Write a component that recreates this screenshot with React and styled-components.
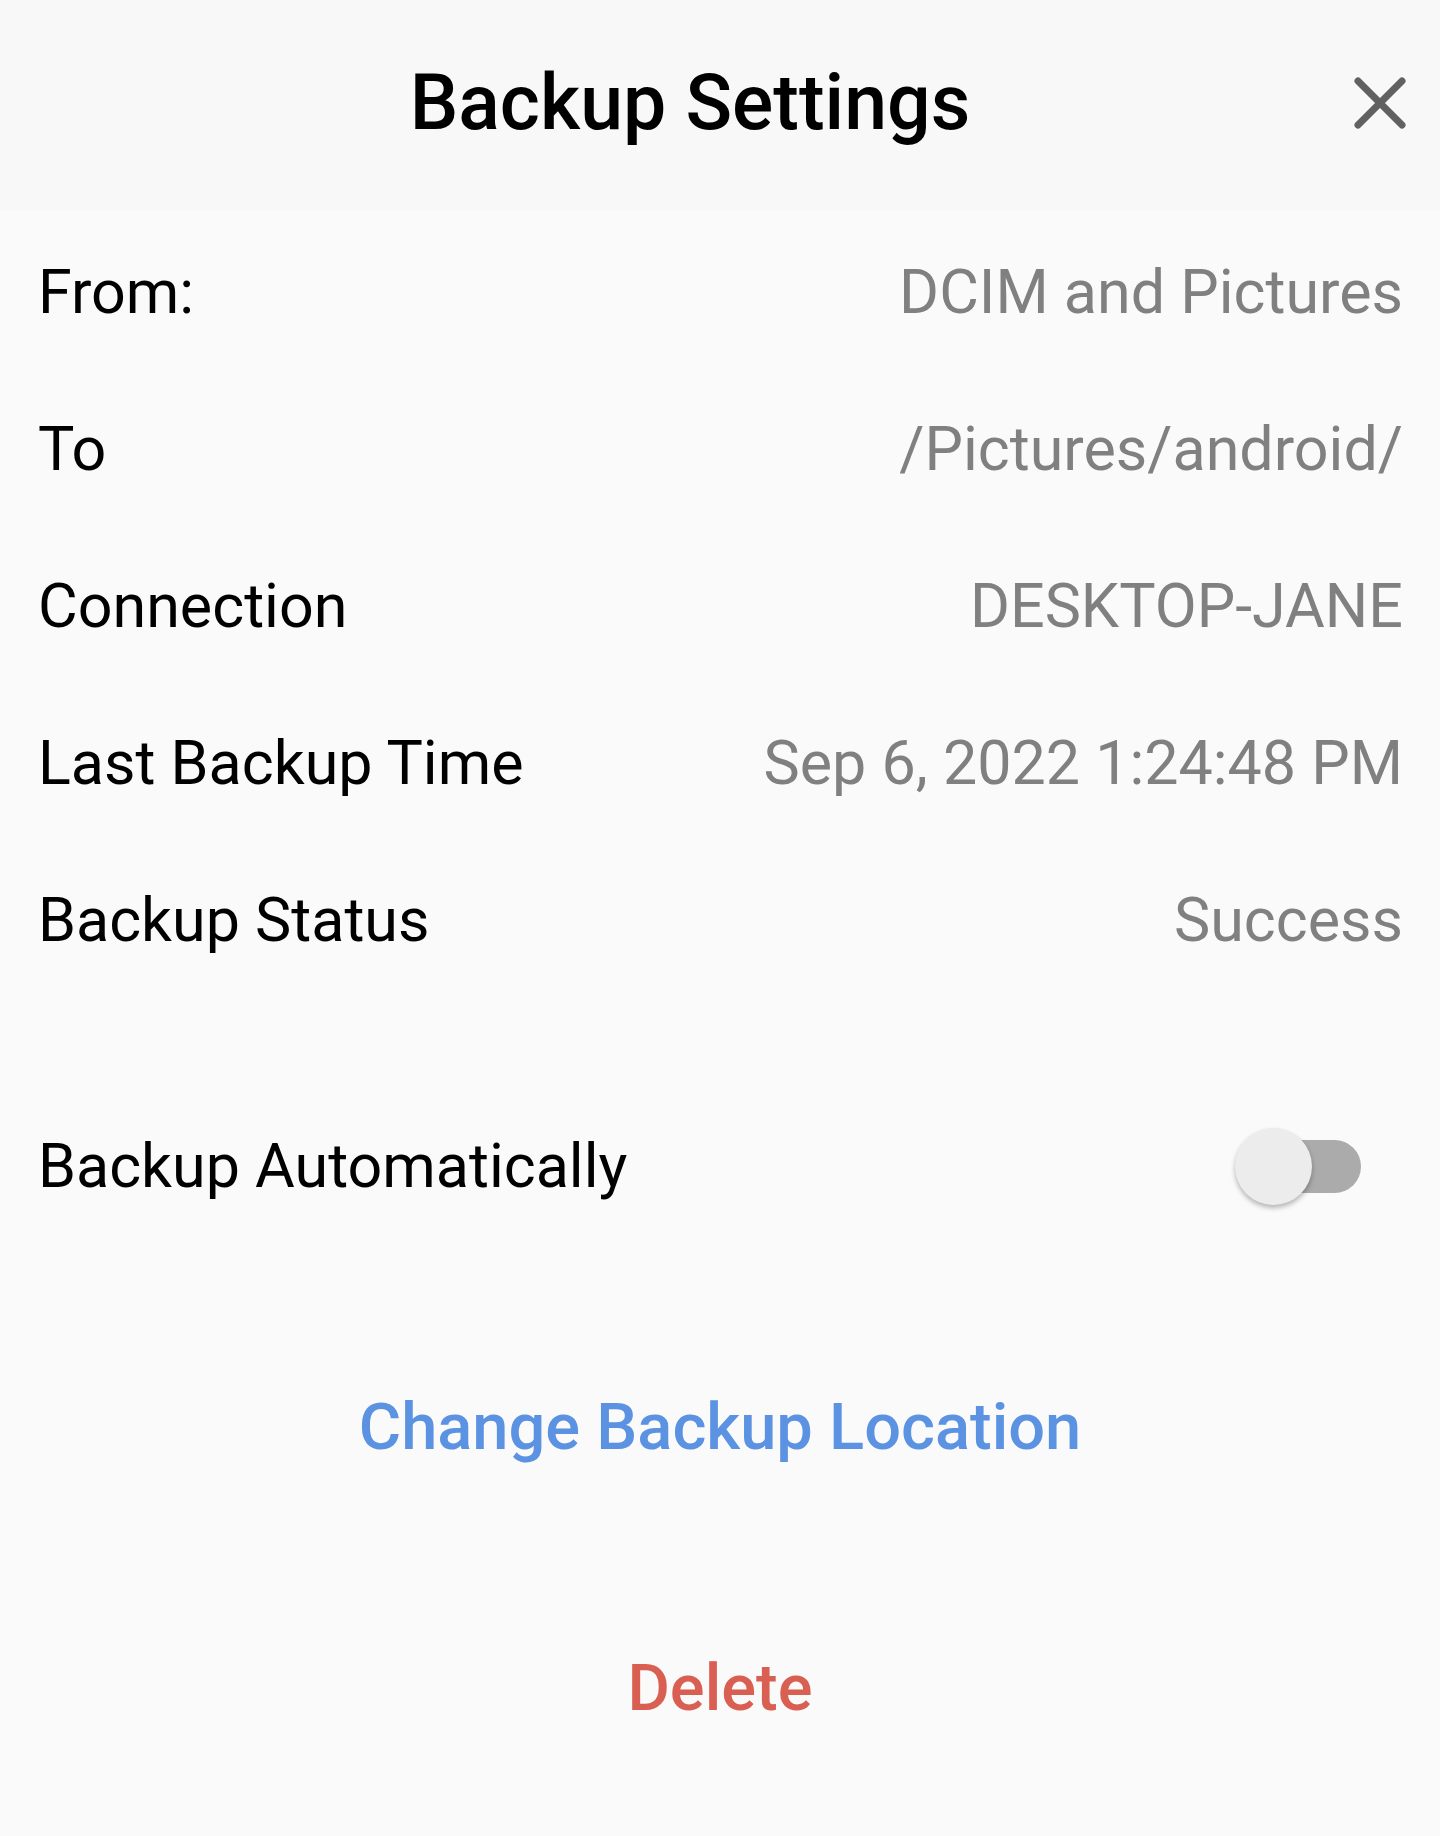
import React, { useState } from "react";
import styled, { createGlobalStyle } from "styled-components";

const Global = createGlobalStyle`
  html, body { margin: 0; padding: 0; background: #fafafa; }
  body { font-family: Roboto, "Noto Sans", "Liberation Sans", sans-serif; }
  * { box-sizing: border-box; }
`;

const Screen = styled.div`
  width: 1440px;
  min-height: 1836px;
  background: #fafafa;
  display: flex;
  flex-direction: column;
`;

const Header = styled.header`
  height: 209px;
  background: #f8f8f8;
  display: flex;
  align-items: center;
  padding-right: 34px;
`;

const Title = styled.h1`
  flex: 1;
  margin: 0;
  padding-left: 26px;
  text-align: center;
  font-size: 77px;
  font-weight: 500;
  line-height: 1;
  color: #000;
  margin-top: -2px;
`;

const CloseButton = styled.button`
  width: 52px;
  height: 52px;
  padding: 0;
  border: none;
  background: none;
  display: flex;
  align-items: center;
  justify-content: center;
  cursor: pointer;
  margin-top: -4px;
`;

const InfoList = styled.section`
  display: flex;
  flex-direction: column;
  padding-top: 5px;
`;

const Row = styled.div`
  height: 157px;
  display: flex;
  align-items: center;
  justify-content: space-between;
  padding: 0 37px 0 38px;
  font-size: 61px;
  line-height: 1;
`;

const Label = styled.span`
  color: #000;
`;

const Value = styled.span`
  color: #808080;
`;

const ToggleRow = styled(Row)`
  margin-top: 89px;
  padding-right: 79px;
`;

const Switch = styled.button`
  position: relative;
  width: 126px;
  height: 77px;
  padding: 0;
  border: none;
  background: none;
  cursor: pointer;
`;

const Track = styled.span`
  position: absolute;
  right: 0;
  top: 12px;
  width: 106px;
  height: 53px;
  border-radius: 27px;
  background: ${(p) => (p.$on ? "#9dbdf0" : "#ababab")};
`;

const Thumb = styled.span`
  position: absolute;
  top: 0;
  left: ${(p) => (p.$on ? "49px" : "0")};
  width: 77px;
  height: 77px;
  border-radius: 50%;
  background: ${(p) => (p.$on ? "#5b92e1" : "#ececec")};
  box-shadow: 0 3px 5px rgba(0, 0, 0, 0.28);
`;

const Actions = styled.section`
  display: flex;
  flex-direction: column;
  gap: 104px;
  padding-top: 104px;
`;

const ActionButton = styled.button`
  height: 157px;
  border: none;
  background: none;
  font-family: Roboto, "Noto Sans", "Liberation Sans", sans-serif;
  font-size: 65px;
  font-weight: 500;
  line-height: 1;
  color: ${(p) => p.$color};
  cursor: pointer;
  display: flex;
  align-items: center;
  justify-content: center;
`;

const CloseIcon = () => (
  <svg width="52" height="52" viewBox="0 0 52 52" fill="none">
    <path
      d="M4 4 L48 48 M48 4 L4 48"
      stroke="#616161"
      strokeWidth="7"
      strokeLinecap="round"
    />
  </svg>
);

const rows = [
  ["From:", "DCIM and Pictures"],
  ["To", "/Pictures/android/"],
  ["Connection", "DESKTOP-JANE"],
  ["Last Backup Time", "Sep 6, 2022 1:24:48 PM"],
  ["Backup Status", "Success"],
];

export default function App() {
  const [auto, setAuto] = useState(false);
  return (
    <Screen>
      <Global />
      <Header>
        <Title>Backup Settings</Title>
        <CloseButton aria-label="Close">
          <CloseIcon />
        </CloseButton>
      </Header>
      <InfoList>
        {rows.map(([l, v]) => (
          <Row key={l}>
            <Label>{l}</Label>
            <Value>{v}</Value>
          </Row>
        ))}
        <ToggleRow>
          <Label>Backup Automatically</Label>
          <Switch aria-label="Backup Automatically" onClick={() => setAuto(!auto)}>
            <Track $on={auto} />
            <Thumb $on={auto} />
          </Switch>
        </ToggleRow>
      </InfoList>
      <Actions>
        <ActionButton $color="#5b92e1">Change Backup Location</ActionButton>
        <ActionButton $color="#d95f52">Delete</ActionButton>
      </Actions>
    </Screen>
  );
}
